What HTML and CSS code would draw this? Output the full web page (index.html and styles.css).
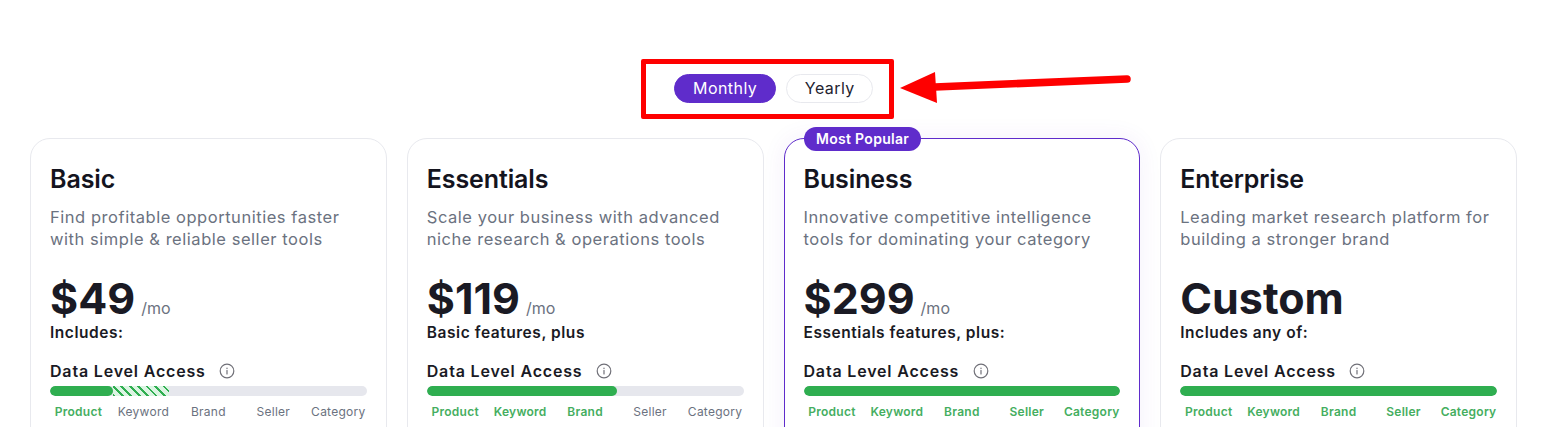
FILE: index.html
```html
<!DOCTYPE html>
<html lang="en">
<head>
<meta charset="utf-8">
<title>Pricing</title>
<link rel="stylesheet" href="styles.css">
</head>
<body>
<svg class="arrow" width="240" height="40" viewBox="0 0 240 40" aria-hidden="true">
  <path d="M35 20 L227 12" stroke="#fe0000" stroke-width="7.5" stroke-linecap="round" fill="none"/>
  <path d="M0 21 L35 5 L37 36 Z" fill="#fe0000"/>
</svg>
<main class="page">
  <div class="toggle-row">
    <div class="toggle-box">
      <button class="pill pill-active">Monthly</button>
      <button class="pill">Yearly</button>
    </div>
  </div>
  <section class="plans">
    <article class="card">
      <h2 class="name">Basic</h2>
      <p class="desc">Find profitable opportunities faster with simple &amp; reliable seller tools</p>
      <div class="price-row"><span class="price">$49</span><span class="per">/mo</span></div>
      <p class="includes">Includes:</p>
      <div class="access-head"><span>Data Level Access</span>
        <svg class="info" viewBox="0 0 16 16"><circle cx="8" cy="8" r="6.8"/><path d="M8 7.4v3.6M8 5v.4"/></svg></div>
      <div class="bar"><div class="fill" style="width:20%"></div><div class="hatch" style="width:17.7%"></div></div>
      <div class="levels"><span class="on">Product</span><span>Keyword</span><span>Brand</span><span>Seller</span><span>Category</span></div>
    </article>
    <article class="card">
      <h2 class="name">Essentials</h2>
      <p class="desc">Scale your business with advanced niche research &amp; operations tools</p>
      <div class="price-row"><span class="price">$119</span><span class="per">/mo</span></div>
      <p class="includes">Basic features, plus</p>
      <div class="access-head"><span>Data Level Access</span>
        <svg class="info" viewBox="0 0 16 16"><circle cx="8" cy="8" r="6.8"/><path d="M8 7.4v3.6M8 5v.4"/></svg></div>
      <div class="bar"><div class="fill" style="width:60%"></div></div>
      <div class="levels"><span class="on">Product</span><span class="on">Keyword</span><span class="on">Brand</span><span>Seller</span><span>Category</span></div>
    </article>
    <article class="card card-popular">
      <span class="badge">Most Popular</span>
      <h2 class="name">Business</h2>
      <p class="desc">Innovative competitive intelligence tools for dominating your category</p>
      <div class="price-row"><span class="price">$299</span><span class="per">/mo</span></div>
      <p class="includes">Essentials features, plus:</p>
      <div class="access-head"><span>Data Level Access</span>
        <svg class="info" viewBox="0 0 16 16"><circle cx="8" cy="8" r="6.8"/><path d="M8 7.4v3.6M8 5v.4"/></svg></div>
      <div class="bar"><div class="fill" style="width:100%"></div></div>
      <div class="levels"><span class="on">Product</span><span class="on">Keyword</span><span class="on">Brand</span><span class="on">Seller</span><span class="on">Category</span></div>
    </article>
    <article class="card">
      <h2 class="name">Enterprise</h2>
      <p class="desc">Leading market research platform for building a stronger brand</p>
      <div class="price-row"><span class="price">Custom</span></div>
      <p class="includes">Includes any of:</p>
      <div class="access-head"><span>Data Level Access</span>
        <svg class="info" viewBox="0 0 16 16"><circle cx="8" cy="8" r="6.8"/><path d="M8 7.4v3.6M8 5v.4"/></svg></div>
      <div class="bar"><div class="fill" style="width:100%"></div></div>
      <div class="levels"><span class="on">Product</span><span class="on">Keyword</span><span class="on">Brand</span><span class="on">Seller</span><span class="on">Category</span></div>
    </article>
  </section>
</main>
</body>
</html>
```
FILE: styles.css
```css
* { box-sizing: border-box; }
html, body { margin: 0; height: 427px; overflow: hidden; background: #fff; }
body { font-family: "Inter", "Liberation Sans", sans-serif; color: #1a1a24; position: relative; }
.page { padding: 59px 31px 0 30px; }
.toggle-row { display: flex; justify-content: center; margin-bottom: 19px; padding-right: 12px; }
.toggle-box {
  display: flex; align-items: center; gap: 10px;
  width: 253px; height: 60px; padding: 0 21px 2px 28px;
  border: 5px solid #fe0000; border-radius: 2px;
}
.pill {
  font: 400 16px/1 "Inter", sans-serif; letter-spacing: .45px;
  height: 29px; padding: 0 17.5px 0 18px; border-radius: 15px;
  border: 1px solid #e8e9ee; background: #fff; color: #23232f;
}
.pill-active { width: 102px; background: #5f2ccb; border-color: #5f2ccb; color: #fff; }
.arrow { position: absolute; left: 900px; top: 67px; }
.plans { display: grid; grid-template-columns: repeat(4, 1fr); gap: 20px; }
.card {
  position: relative; height: 400px; padding: 27px 19px 0;
  border: 1px solid #e8e9ee; border-radius: 20px; background: #fff;
}
.card-popular { border-color: #5f2ccb; box-shadow: 0 0 24px rgba(95, 44, 203, .07); }
.badge {
  position: absolute; left: 19px; top: -12px; height: 24px; padding: 0 12px 0 12.5px;
  border-radius: 12px; background: #5f2ccb; color: #fff;
  font-size: 14px; font-weight: 600; line-height: 24px; letter-spacing: .3px;
}
.name { margin: 0; font-size: 25px; font-weight: 600; line-height: 26px; letter-spacing: -.1px; color: #14141e; }
.desc { margin: 14px 0 0; font-size: 16.5px; line-height: 22px; letter-spacing: .54px; color: #6b7280; }
.price-row { display: flex; align-items: baseline; gap: 6px; margin-top: 23px; height: 50px; }
.price { font-size: 43px; font-weight: 700; line-height: 50px; color: #1a1a24; }
.per { font-size: 16px; color: #6b7280; }
.includes { margin: 0; font-size: 15.5px; font-weight: 600; line-height: 20px; letter-spacing: .55px; color: #1a1a24; }
.access-head { display: flex; align-items: center; gap: 13.5px; margin-top: 18px; font-size: 16px; font-weight: 600; line-height: 20px; letter-spacing: .82px; }
.info { width: 16px; height: 16px; fill: none; stroke: #707078; stroke-width: 1.2; stroke-linecap: round; }
.bar { display: flex; height: 10px; margin-top: 5px; border-radius: 5px; background: #e6e7ed; overflow: hidden; }
.fill { background: #2fae50; border-radius: 5px; }
.hatch { background: repeating-linear-gradient(45deg, #2fae50 0 1.8px, #dcf4e3 1.8px 6px); }
.levels { display: grid; grid-template-columns: repeat(5, 1fr); gap: 8px; margin-top: 8px; font-size: 12px; line-height: 16px; letter-spacing: .25px; text-align: center; color: #6b7280; white-space: nowrap; }
.levels span { display: block; }
.levels .on { color: #45ae5f; font-weight: 600; }
```
